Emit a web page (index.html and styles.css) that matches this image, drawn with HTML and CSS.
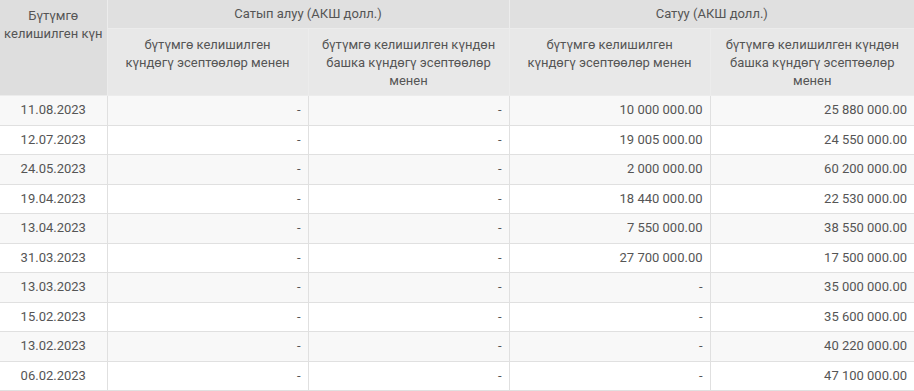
FILE: index.html
```html
<!DOCTYPE html>
<html lang="ky">
<head>
<meta charset="utf-8">
<title>Валюта операциялары</title>
<link rel="stylesheet" href="styles.css">
</head>
<body>
<table class="rates">
  <colgroup>
    <col class="c-date">
    <col class="c-val">
    <col class="c-val">
    <col class="c-val">
    <col class="c-last">
  </colgroup>
  <thead>
    <tr class="h1">
      <th rowspan="2" class="h-date">Бүтүмгө келишилген күн</th>
      <th colspan="2">Сатып алуу (АКШ долл.)</th>
      <th colspan="2">Сатуу (АКШ долл.)</th>
    </tr>
    <tr class="h2">
      <th>бүтүмгө келишилген күндөгү эсептөөлөр менен</th>
      <th>бүтүмгө келишилген күндөн башка күндөгү эсептөөлөр менен</th>
      <th>бүтүмгө келишилген күндөгү эсептөөлөр менен</th>
      <th>бүтүмгө келишилген күндөн башка күндөгү эсептөөлөр менен</th>
    </tr>
  </thead>
  <tbody>
    <tr><td class="d">11.08.2023</td><td>-</td><td>-</td><td>10 000 000.00</td><td>25 880 000.00</td></tr>
    <tr><td class="d">12.07.2023</td><td>-</td><td>-</td><td>19 005 000.00</td><td>24 550 000.00</td></tr>
    <tr><td class="d">24.05.2023</td><td>-</td><td>-</td><td>2 000 000.00</td><td>60 200 000.00</td></tr>
    <tr><td class="d">19.04.2023</td><td>-</td><td>-</td><td>18 440 000.00</td><td>22 530 000.00</td></tr>
    <tr><td class="d">13.04.2023</td><td>-</td><td>-</td><td>7 550 000.00</td><td>38 550 000.00</td></tr>
    <tr><td class="d">31.03.2023</td><td>-</td><td>-</td><td>27 700 000.00</td><td>17 500 000.00</td></tr>
    <tr><td class="d">13.03.2023</td><td>-</td><td>-</td><td>-</td><td>35 000 000.00</td></tr>
    <tr><td class="d">15.02.2023</td><td>-</td><td>-</td><td>-</td><td>35 600 000.00</td></tr>
    <tr><td class="d">13.02.2023</td><td>-</td><td>-</td><td>-</td><td>40 220 000.00</td></tr>
    <tr><td class="d">06.02.2023</td><td>-</td><td>-</td><td>-</td><td>47 100 000.00</td></tr>
  </tbody>
</table>
</body>
</html>
```

FILE: styles.css
```css
html, body {
  margin: 0;
  padding: 0;
  background: #ffffff;
}

body {
  font-family: Roboto, "Liberation Sans", sans-serif;
  font-size: 13px;
  color: #555555;
}

.rates {
  border-collapse: collapse;
  table-layout: fixed;
  width: 914px;
}

.c-date { width: 107px; }
.c-val { width: 201px; }
.c-last { width: 204px; }

.rates th {
  font-weight: normal;
  text-align: center;
  vertical-align: top;
  line-height: 18px;
  border: 1px solid #ececec;
  border-top: none;
}

.rates th:first-child { border-left: none; }

.h1 th {
  background: #e0e0e0;
  padding: 5px 6px;
}

.h1 th.h-date {
  background: #dedede;
  padding: 7px 4px 4px;
}

.h2 th {
  background: #e8e8e8;
  padding: 7px 12px 5px;
}

.rates td {
  text-align: right;
  padding: 6px 7px;
  line-height: 16.5px;
  border: 1px solid #e0e0e0;
  white-space: nowrap;
}

.rates td:first-child { border-left: none; }
.rates td:last-child { border-right: none; }
.rates th:last-child { border-right: none; }

.rates td.d { text-align: center; }

.rates tbody tr:nth-child(odd) td { background: #f8f8f8; }
.rates tbody tr:nth-child(even) td { background: #ffffff; }
```
